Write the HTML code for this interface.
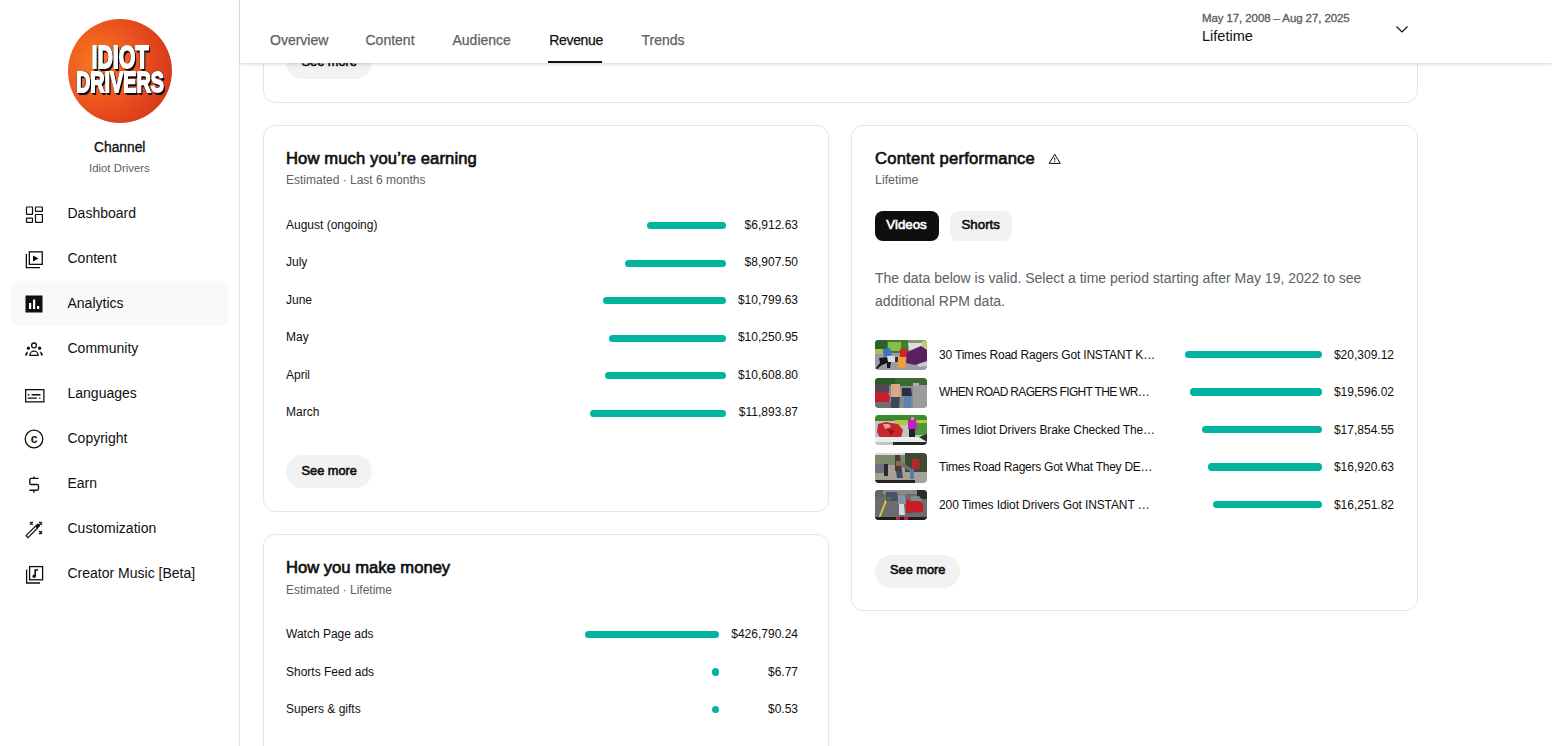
<!DOCTYPE html>
<html><head><meta charset="utf-8"><style>
html,body{margin:0;padding:0;background:#fff;width:1552px;height:746px;overflow:hidden;position:relative}
body{font-family:"Liberation Sans",sans-serif;color:#0f0f0f}
.t{position:absolute;line-height:1;white-space:nowrap}
.a{position:absolute}
.card{box-sizing:border-box;border:1px solid #e5e5e5;border-radius:12px;background:#fff}
</style></head><body>
<div class="a" style="left:239px;top:0px;width:1px;height:746px;background:#e5e5e5"></div>
<div class="a" style="left:68px;top:19px;width:104px;height:104px;border-radius:50%;background:radial-gradient(circle at 28% 42%, #f8781f 0%, #ef5a1f 35%, #e0421c 65%, #c52f18 100%);overflow:hidden">
<div style="position:absolute;left:-20px;top:27px;width:144px;text-align:center;font:bold 31px/24px 'Liberation Sans',sans-serif;color:#fff;transform:scaleX(0.69);-webkit-text-stroke:1.8px #fff;text-shadow:2px 2px 0 #0a0a0a,2.5px 2.5px 0 #0a0a0a,1px 2px 0 #0a0a0a,2px 1px 0 #0a0a0a,-1px 1px 0 #0a0a0a,1px -1px 0 #0a0a0a,-1px -1px 0 #0a0a0a">IDIOT</div>
<div style="position:absolute;left:-30px;top:51px;width:164px;text-align:center;font:bold 30px/24px 'Liberation Sans',sans-serif;color:#fff;transform:scaleX(0.66);-webkit-text-stroke:1.8px #fff;text-shadow:2px 2px 0 #0a0a0a,2.5px 2.5px 0 #0a0a0a,1px 2px 0 #0a0a0a,2px 1px 0 #0a0a0a,-1px 1px 0 #0a0a0a,1px -1px 0 #0a0a0a,-1px -1px 0 #0a0a0a">DRIVERS</div>
</div>
<div class="t" style="left:94px;top:140.60px;font-size:13.8px;color:#0f0f0f;font-weight:normal;-webkit-text-stroke:0.3px #0f0f0f">Channel</div>
<div class="t" style="left:89px;top:163.30px;font-size:11.4px;color:#606060;font-weight:normal;">Idiot Drivers</div>
<div class="a" style="left:11px;top:281px;width:217px;height:45px;background:#f9f9f9;border-radius:6px"></div>
<div class="t" style="left:67.5px;top:206.00px;font-size:14px;color:#0f0f0f;font-weight:normal;">Dashboard</div>
<div class="t" style="left:67.5px;top:251.00px;font-size:14px;color:#0f0f0f;font-weight:normal;">Content</div>
<div class="t" style="left:67.5px;top:296.00px;font-size:14px;color:#0f0f0f;font-weight:normal;">Analytics</div>
<div class="t" style="left:67.5px;top:341.00px;font-size:14px;color:#0f0f0f;font-weight:normal;">Community</div>
<div class="t" style="left:67.5px;top:386.00px;font-size:14px;color:#0f0f0f;font-weight:normal;">Languages</div>
<div class="t" style="left:67.5px;top:431.00px;font-size:14px;color:#0f0f0f;font-weight:normal;">Copyright</div>
<div class="t" style="left:67.5px;top:476.00px;font-size:14px;color:#0f0f0f;font-weight:normal;">Earn</div>
<div class="t" style="left:67.5px;top:521.00px;font-size:14px;color:#0f0f0f;font-weight:normal;">Customization</div>
<div class="t" style="left:67.5px;top:566.00px;font-size:14px;color:#0f0f0f;font-weight:normal;">Creator Music [Beta]</div>
<svg class="a" style="left:22px;top:201.5px" width="24" height="24" viewBox="0 0 24 24" fill="none" stroke="#0f0f0f" stroke-width="1.3"><g stroke-width="1.2"><rect x="4.5" y="5" width="6" height="7.4" rx="0.3"/><rect x="4.5" y="16.1" width="6" height="4.3" rx="0.3"/><rect x="13.5" y="5" width="6.9" height="4.3" rx="0.3"/><rect x="13.5" y="12.5" width="6.9" height="7.9" rx="0.3"/></g></svg>
<svg class="a" style="left:22px;top:246.5px" width="24" height="24" viewBox="0 0 24 24" fill="none" stroke="#0f0f0f" stroke-width="1.3"><rect x="7.35" y="4.85" width="12.9" height="12.5"/><path d="M4.35 6.9v13.65H18" /><path d="M11 8.5v6l5.5-3z" fill="#0f0f0f" stroke="none"/></svg>
<svg class="a" style="left:22px;top:291.5px" width="24" height="24" viewBox="0 0 24 24" fill="none" stroke="#0f0f0f" stroke-width="1.3"><rect x="3.5" y="3.5" width="17" height="17" fill="#0f0f0f" stroke="none"/><rect x="7" y="11" width="2.2" height="6" fill="#fff" stroke="none"/><rect x="11" y="7.5" width="2.2" height="9.5" fill="#fff" stroke="none"/><rect x="15" y="14" width="2.2" height="3" fill="#fff" stroke="none"/></svg>
<svg class="a" style="left:22px;top:336.5px" width="24" height="24" viewBox="0 0 24 24" fill="none" stroke="#0f0f0f" stroke-width="1.3"><circle cx="12" cy="8.4" r="2.4"/><path d="M7.9 18.3a4.1 4.1 0 0 1 8.2 0z"/><circle cx="6.4" cy="11.2" r="1.6" fill="#0f0f0f" stroke="none"/><circle cx="17.6" cy="11.2" r="1.6" fill="#0f0f0f" stroke="none"/><path d="M3 18.4c0.3-2.2 1.3-3.6 3-4l-1 4z" fill="#0f0f0f" stroke="none"/><path d="M21 18.4c-0.3-2.2-1.3-3.6-3-4l1 4z" fill="#0f0f0f" stroke="none"/></svg>
<svg class="a" style="left:22px;top:381.5px" width="24" height="24" viewBox="0 0 24 24" fill="none" stroke="#0f0f0f" stroke-width="1.3"><rect x="3.65" y="7.65" width="18.2" height="12.2"/><path d="M5.8 12.8h1.5M9.6 12.8h8.9M5.8 16.1h9M17.1 16.1h1.4" stroke-width="1.4"/></svg>
<svg class="a" style="left:22px;top:426.5px" width="24" height="24" viewBox="0 0 24 24" fill="none" stroke="#0f0f0f" stroke-width="1.3"><circle cx="12" cy="12" r="8.8"/><text x="12.2" y="16" font-size="12" font-weight="bold" text-anchor="middle" font-family="Liberation Sans" fill="#0f0f0f" stroke="none">c</text></svg>
<svg class="a" style="left:22px;top:471.5px" width="24" height="24" viewBox="0 0 24 24" fill="none" stroke="#0f0f0f" stroke-width="1.3"><g stroke-width="1.35"><path d="M16.6 6.4H9C8.2 6.4 7.8 7 7.8 7.8v3.4c0 .8.5 1.3 1.2 1.3h6.3c.7 0 1.2.5 1.2 1.3v3c0 .8-.5 1.4-1.3 1.4H7.4"/><path d="M11.9 4.4v2M11.9 18.2v2.6"/></g></svg>
<svg class="a" style="left:22px;top:516.5px" width="24" height="24" viewBox="0 0 24 24" fill="none" stroke="#0f0f0f" stroke-width="1.3"><path d="M4 18.6l9.6-9.6 2 2-9.6 9.6z" stroke-width="1.2"/><path d="M13.6 9l2.2-2.2 2 2-2.2 2.2z" fill="#0f0f0f" stroke-width="1"/><path d="M8 5l2.8 2.8M10.8 5l-2.8 2.8M17.2 5l2.8 2.8M20 5l-2.8 2.8M17.2 14.1l2.8 2.8M20 14.1l-2.8 2.8" stroke-width="1.4"/></svg>
<svg class="a" style="left:22px;top:561.5px" width="24" height="24" viewBox="0 0 24 24" fill="none" stroke="#0f0f0f" stroke-width="1.3"><rect x="7.6" y="4.6" width="13" height="13.2"/><path d="M4.6 7.6v13.4H18"/><circle cx="12.2" cy="14.2" r="1.7" fill="#0f0f0f" stroke="none"/><path d="M13.2 14.2V8h2.8" stroke-width="1.6"/></svg>
<div class="a card" style="left:263px;top:-40px;width:1155px;height:143px"></div>
<div class="a" style="left:286px;top:46px;width:86px;height:33px;background:#f2f2f2;border-radius:16.5px"></div>
<div class="t" style="left:301.5px;top:56.10px;font-size:12.8px;color:#0f0f0f;font-weight:normal;-webkit-text-stroke:0.6px currentColor">See more</div>
<div class="a" style="left:240px;top:0px;width:1312px;height:63px;background:#fff;box-shadow:0 1px 2px rgba(0,0,0,0.1),0 2px 6px rgba(0,0,0,0.07)"></div>
<div class="t" style="left:270px;top:33.00px;font-size:14px;color:#606060;font-weight:normal;-webkit-text-stroke:0.25px currentColor">Overview</div>
<div class="t" style="left:365.5px;top:33.00px;font-size:14px;color:#606060;font-weight:normal;-webkit-text-stroke:0.25px currentColor">Content</div>
<div class="t" style="left:452.5px;top:33.00px;font-size:14px;color:#606060;font-weight:normal;-webkit-text-stroke:0.25px currentColor">Audience</div>
<div class="t" style="left:549.3px;top:33.00px;font-size:14px;color:#0f0f0f;font-weight:normal;-webkit-text-stroke:0.25px currentColor;letter-spacing:-0.35px">Revenue</div>
<div class="t" style="left:641.5px;top:33.00px;font-size:14px;color:#606060;font-weight:normal;-webkit-text-stroke:0.25px currentColor">Trends</div>
<div class="a" style="left:548px;top:61px;width:54px;height:2px;background:#0f0f0f"></div>
<div class="t" style="left:1202px;top:13.25px;font-size:11.5px;color:#606060;font-weight:normal;-webkit-text-stroke:0.35px currentColor;letter-spacing:-0.1px">May 17, 2008 – Aug 27, 2025</div>
<div class="t" style="left:1202px;top:28.75px;font-size:14.5px;color:#0f0f0f;font-weight:normal;">Lifetime</div>
<svg class="a" style="left:1390px;top:17px" width="24" height="24" viewBox="0 0 24 24" fill="none" stroke="#0f0f0f" stroke-width="1.15"><path d="M6.5 9.5l5.5 5.5 5.5-5.5"/></svg>
<div class="a card" style="left:263px;top:125px;width:566px;height:387px"></div>
<div class="t" style="left:286px;top:150.70px;font-size:16.6px;color:#0f0f0f;font-weight:normal;-webkit-text-stroke:0.65px #0f0f0f;letter-spacing:0.12px">How much you’re earning</div>
<div class="t" style="left:286px;top:174.00px;font-size:12px;color:#606060;font-weight:normal;">Estimated · Last 6 months</div>
<div class="t" style="left:286px;top:218.70px;font-size:12px;color:#0f0f0f;font-weight:normal;">August (ongoing)</div>
<div class="a" style="left:647px;top:222.1px;width:79px;height:7.4px;background:#00b4a0;border-radius:3.7px"></div>
<div class="t" style="right:754px;top:218.70px;font-size:12px;color:#0f0f0f;font-weight:normal;text-align:right;">$6,912.63</div>
<div class="t" style="left:286px;top:256.20px;font-size:12px;color:#0f0f0f;font-weight:normal;">July</div>
<div class="a" style="left:624.5px;top:259.6px;width:101.5px;height:7.4px;background:#00b4a0;border-radius:3.7px"></div>
<div class="t" style="right:754px;top:256.20px;font-size:12px;color:#0f0f0f;font-weight:normal;text-align:right;">$8,907.50</div>
<div class="t" style="left:286px;top:293.70px;font-size:12px;color:#0f0f0f;font-weight:normal;">June</div>
<div class="a" style="left:603px;top:297.1px;width:123px;height:7.4px;background:#00b4a0;border-radius:3.7px"></div>
<div class="t" style="right:754px;top:293.70px;font-size:12px;color:#0f0f0f;font-weight:normal;text-align:right;">$10,799.63</div>
<div class="t" style="left:286px;top:331.20px;font-size:12px;color:#0f0f0f;font-weight:normal;">May</div>
<div class="a" style="left:609px;top:334.6px;width:117px;height:7.4px;background:#00b4a0;border-radius:3.7px"></div>
<div class="t" style="right:754px;top:331.20px;font-size:12px;color:#0f0f0f;font-weight:normal;text-align:right;">$10,250.95</div>
<div class="t" style="left:286px;top:368.70px;font-size:12px;color:#0f0f0f;font-weight:normal;">April</div>
<div class="a" style="left:605px;top:372.1px;width:121px;height:7.4px;background:#00b4a0;border-radius:3.7px"></div>
<div class="t" style="right:754px;top:368.70px;font-size:12px;color:#0f0f0f;font-weight:normal;text-align:right;">$10,608.80</div>
<div class="t" style="left:286px;top:406.20px;font-size:12px;color:#0f0f0f;font-weight:normal;">March</div>
<div class="a" style="left:590px;top:409.6px;width:136px;height:7.4px;background:#00b4a0;border-radius:3.7px"></div>
<div class="t" style="right:754px;top:406.20px;font-size:12px;color:#0f0f0f;font-weight:normal;text-align:right;">$11,893.87</div>
<div class="a" style="left:286px;top:455px;width:86px;height:33px;background:#f2f2f2;border-radius:16.5px"></div>
<div class="t" style="left:301.5px;top:465.10px;font-size:12.8px;color:#0f0f0f;font-weight:normal;-webkit-text-stroke:0.6px currentColor">See more</div>
<div class="a card" style="left:263px;top:534px;width:566px;height:300px"></div>
<div class="t" style="left:286px;top:559.70px;font-size:16.6px;color:#0f0f0f;font-weight:normal;-webkit-text-stroke:0.65px #0f0f0f">How you make money</div>
<div class="t" style="left:286px;top:584.00px;font-size:12px;color:#606060;font-weight:normal;">Estimated · Lifetime</div>
<div class="t" style="left:286px;top:628.00px;font-size:12px;color:#0f0f0f;font-weight:normal;">Watch Page ads</div>
<div class="t" style="right:754px;top:628.00px;font-size:12px;color:#0f0f0f;font-weight:normal;text-align:right;">$426,790.24</div>
<div class="t" style="left:286px;top:665.50px;font-size:12px;color:#0f0f0f;font-weight:normal;">Shorts Feed ads</div>
<div class="t" style="right:754px;top:665.50px;font-size:12px;color:#0f0f0f;font-weight:normal;text-align:right;">$6.77</div>
<div class="t" style="left:286px;top:703.00px;font-size:12px;color:#0f0f0f;font-weight:normal;">Supers &amp; gifts</div>
<div class="t" style="right:754px;top:703.00px;font-size:12px;color:#0f0f0f;font-weight:normal;text-align:right;">$0.53</div>
<div class="a" style="left:585px;top:630.8px;width:134px;height:7.2px;background:#00b4a0;border-radius:3.6px"></div>
<div class="a" style="left:711.7px;top:668.2px;width:7.4px;height:7.4px;background:#00b4a0;border-radius:50%"></div>
<div class="a" style="left:711.7px;top:705.5px;width:7.4px;height:7.4px;background:#00b4a0;border-radius:50%"></div>
<div class="a card" style="left:851px;top:125px;width:567px;height:486px"></div>
<div class="t" style="left:875px;top:150.70px;font-size:16.6px;color:#0f0f0f;font-weight:normal;-webkit-text-stroke:0.65px #0f0f0f;letter-spacing:0.22px">Content performance</div>
<svg class="a" style="left:1048px;top:151px" width="14" height="14" viewBox="0 0 14 14" fill="none" stroke="#0f0f0f" stroke-width="1"><path d="M6.7 3.3L1.1 12.4h11.2z"/><path d="M6.7 6.6v2.9M6.7 10.2v1" /></svg>
<div class="t" style="left:875px;top:173.80px;font-size:12.4px;color:#606060;font-weight:normal;">Lifetime</div>
<div class="a" style="left:875px;top:211px;width:64px;height:30px;background:#0f0f0f;border-radius:8px"></div>
<div class="t" style="left:886.3px;top:217.85px;font-size:13.3px;color:#fff;font-weight:normal;-webkit-text-stroke:0.6px currentColor">Videos</div>
<div class="a" style="left:950px;top:211px;width:62px;height:30px;background:#f2f2f2;border-radius:8px"></div>
<div class="t" style="left:961.5px;top:217.85px;font-size:13.3px;color:#0f0f0f;font-weight:normal;-webkit-text-stroke:0.6px currentColor">Shorts</div>
<div class="t" style="left:875px;top:271.00px;font-size:14px;color:#606060;font-weight:normal;">The data below is valid. Select a time period starting after May 19, 2022 to see</div>
<div class="t" style="left:875px;top:294.00px;font-size:14px;color:#606060;font-weight:normal;">additional RPM data.</div>
<div class="a" style="left:875px;top:340.0px;width:52px;height:30px;border-radius:4px;overflow:hidden;filter:blur(0.3px)"><svg width="52" height="30" viewBox="0 0 52 30" style="display:block"><rect width="52" height="30" fill="#9c9aa2"/><rect x="0" y="0" width="34" height="13" fill="#3f7e2e"/><rect x="0" y="0" width="12" height="9" fill="#2c6226"/><rect x="13" y="2" width="13" height="9" fill="#86bc4a"/><rect x="0" y="9" width="8" height="5" fill="#a8c05a"/><rect x="33" y="0" width="19" height="4" fill="#8a9a66"/><path d="M33 3h15l2 9H34z" fill="#dcdce2"/><rect x="47" y="1" width="5" height="10" fill="#c8c878"/><path d="M40 20h12v6l-8 1z" fill="#cacad2"/><path d="M8 9l7-1 2 7-8 2z" fill="#3a74c8"/><path d="M4 18l10-1 2 5-1 6h-3v-5l-5 2-5 4H0l5-6z" fill="#161616"/><path d="M12 16h8l1 6h-8z" fill="#dcd8e4"/><path d="M25 9h7l1 8h-8z" fill="#d0242c"/><path d="M22 17h9l-1 11h-6l-2-4z" fill="#f0a030"/><path d="M32 12l14-6 6 4v11l-12 4-9-2z" fill="#5a1e62"/><path d="M20 17h3v5h-3z" fill="#3a2a4a"/></svg></div>
<div class="t" style="left:939px;top:348.70px;font-size:12px;color:#0f0f0f;font-weight:normal;letter-spacing:-0.18px">30 Times Road Ragers Got INSTANT K…</div>
<div class="a" style="left:1185px;top:350.9px;width:137px;height:7.4px;background:#00b4a0;border-radius:3.7px"></div>
<div class="t" style="right:158px;top:348.70px;font-size:12px;color:#0f0f0f;font-weight:normal;text-align:right;">$20,309.12</div>
<div class="a" style="left:875px;top:377.5px;width:52px;height:30px;border-radius:4px;overflow:hidden;filter:blur(0.3px)"><svg width="52" height="30" viewBox="0 0 52 30" style="display:block"><rect width="52" height="30" fill="#8a8a8a"/><rect x="0" y="0" width="52" height="8" fill="#3c6a34"/><rect x="0" y="0" width="20" height="6" fill="#2e5a2a"/><rect x="0" y="6" width="14" height="9" fill="#4e4a50"/><path d="M0 14h12l3 5-1 6H0z" fill="#c81e2a"/><rect x="0" y="24" width="16" height="6" fill="#707070"/><rect x="38" y="7" width="14" height="23" fill="#9c9c9a"/><rect x="38" y="5" width="6" height="3" fill="#a8b0c0"/><path d="M16 6h9l1 13h-10z" fill="#d8a888"/><path d="M16 19h9l-1 11h-8z" fill="#3a4a5a"/><path d="M27 10h9l1 8h-10z" fill="#2a2e48"/><path d="M29 18h7v12h-7z" fill="#5a84b8"/></svg></div>
<div class="t" style="left:939px;top:386.20px;font-size:12px;color:#0f0f0f;font-weight:normal;letter-spacing:-0.67px">WHEN ROAD RAGERS FIGHT THE WR…</div>
<div class="a" style="left:1190px;top:388.4px;width:132px;height:7.4px;background:#00b4a0;border-radius:3.7px"></div>
<div class="t" style="right:158px;top:386.20px;font-size:12px;color:#0f0f0f;font-weight:normal;text-align:right;">$19,596.02</div>
<div class="a" style="left:875px;top:415.0px;width:52px;height:30px;border-radius:4px;overflow:hidden;filter:blur(0.3px)"><svg width="52" height="30" viewBox="0 0 52 30" style="display:block"><rect width="52" height="30" fill="#c4c4c4"/><rect x="0" y="0" width="52" height="6" fill="#3a8a2e"/><rect x="20" y="5" width="32" height="5" fill="#b8c448"/><rect x="40" y="8" width="12" height="12" fill="#4a9a3a"/><path d="M3 9l8-2 12 2 5 6-2 8H5l-3-6z" fill="#c8282a"/><path d="M8 9h6l2 3-6 2z" fill="#e8a0a0"/><path d="M12 14l8 2-4 4z" fill="#8a1a1a"/><path d="M33 4h8l1 10h-9z" fill="#c020c0"/><rect x="36" y="2" width="3" height="3" fill="#d0a080"/><rect x="34" y="14" width="6" height="8" fill="#2a1a2a"/><path d="M0 22h52v5H0z" fill="#e6eeee"/><path d="M18 27h34v3H18z" fill="#262626"/><path d="M44 22l8-3v8z" fill="#303030"/></svg></div>
<div class="t" style="left:939px;top:423.70px;font-size:12px;color:#0f0f0f;font-weight:normal;letter-spacing:-0.125px">Times Idiot Drivers Brake Checked The…</div>
<div class="a" style="left:1202px;top:425.9px;width:120px;height:7.4px;background:#00b4a0;border-radius:3.7px"></div>
<div class="t" style="right:158px;top:423.70px;font-size:12px;color:#0f0f0f;font-weight:normal;text-align:right;">$17,854.55</div>
<div class="a" style="left:875px;top:452.5px;width:52px;height:30px;border-radius:4px;overflow:hidden;filter:blur(0.3px)"><svg width="52" height="30" viewBox="0 0 52 30" style="display:block"><rect width="52" height="30" fill="#a6a096"/><rect x="0" y="0" width="52" height="4" fill="#d8dcd6"/><rect x="0" y="2" width="32" height="10" fill="#7c8a6c"/><rect x="30" y="0" width="22" height="19" fill="#3e4a34"/><rect x="0" y="11" width="9" height="9" fill="#6e7280"/><rect x="9" y="11" width="4" height="12" fill="#2e2a2a"/><path d="M20 2h5l2 16h-7z" fill="#4a3a34"/><path d="M21 8h5v5h-5z" fill="#8a6a50"/><path d="M21 18h6l1 7h-6z" fill="#3a4a68"/><path d="M27 9l10 7-1 3-10-6z" fill="#6c7078"/><path d="M37 6h7l1 10h-8z" fill="#b02a2e"/><path d="M35 16h4v10h-4z" fill="#5a7aa8"/><rect x="0" y="27" width="40" height="3" fill="#222"/></svg></div>
<div class="t" style="left:939px;top:461.20px;font-size:12px;color:#0f0f0f;font-weight:normal;letter-spacing:-0.25px">Times Road Ragers Got What They DE…</div>
<div class="a" style="left:1208px;top:463.4px;width:114px;height:7.4px;background:#00b4a0;border-radius:3.7px"></div>
<div class="t" style="right:158px;top:461.20px;font-size:12px;color:#0f0f0f;font-weight:normal;text-align:right;">$16,920.63</div>
<div class="a" style="left:875px;top:490.0px;width:52px;height:30px;border-radius:4px;overflow:hidden;filter:blur(0.3px)"><svg width="52" height="30" viewBox="0 0 52 30" style="display:block"><rect width="52" height="30" fill="#6c6c6e"/><rect x="0" y="0" width="52" height="4" fill="#8a8a88"/><rect x="42" y="0" width="10" height="9" fill="#2a2e2a"/><rect x="0" y="0" width="8" height="7" fill="#5a6a5a"/><path d="M10.5 9l2 1-8 20h-2z" fill="#d8c030"/><path d="M11 2h11l1 9H11z" fill="#4a5068"/><rect x="12" y="7" width="4" height="3" fill="#4a7a3a"/><path d="M23 5h7l1 9h-8z" fill="#8c90a8"/><rect x="25" y="2" width="4" height="4" fill="#a08070"/><path d="M24 14h5l1 11h-6z" fill="#d6d8e6"/><path d="M31 10l10-2 7 6v8l-17 1z" fill="#c41e28"/><path d="M36 6h8l4 5H35z" fill="#7a8a8a"/><rect x="0" y="27" width="52" height="3" fill="#1e1e1e"/><rect x="21" y="27" width="4" height="3" fill="#c02040"/><rect x="29" y="27" width="4" height="3" fill="#c02040"/></svg></div>
<div class="t" style="left:939px;top:498.70px;font-size:12px;color:#0f0f0f;font-weight:normal;letter-spacing:-0.1px">200 Times Idiot Drivers Got INSTANT …</div>
<div class="a" style="left:1213px;top:500.9px;width:109px;height:7.4px;background:#00b4a0;border-radius:3.7px"></div>
<div class="t" style="right:158px;top:498.70px;font-size:12px;color:#0f0f0f;font-weight:normal;text-align:right;">$16,251.82</div>
<div class="a" style="left:875px;top:554.5px;width:85px;height:33px;background:#f2f2f2;border-radius:16.5px"></div>
<div class="t" style="left:890px;top:564.10px;font-size:12.8px;color:#0f0f0f;font-weight:normal;-webkit-text-stroke:0.6px currentColor">See more</div>
</body></html>
